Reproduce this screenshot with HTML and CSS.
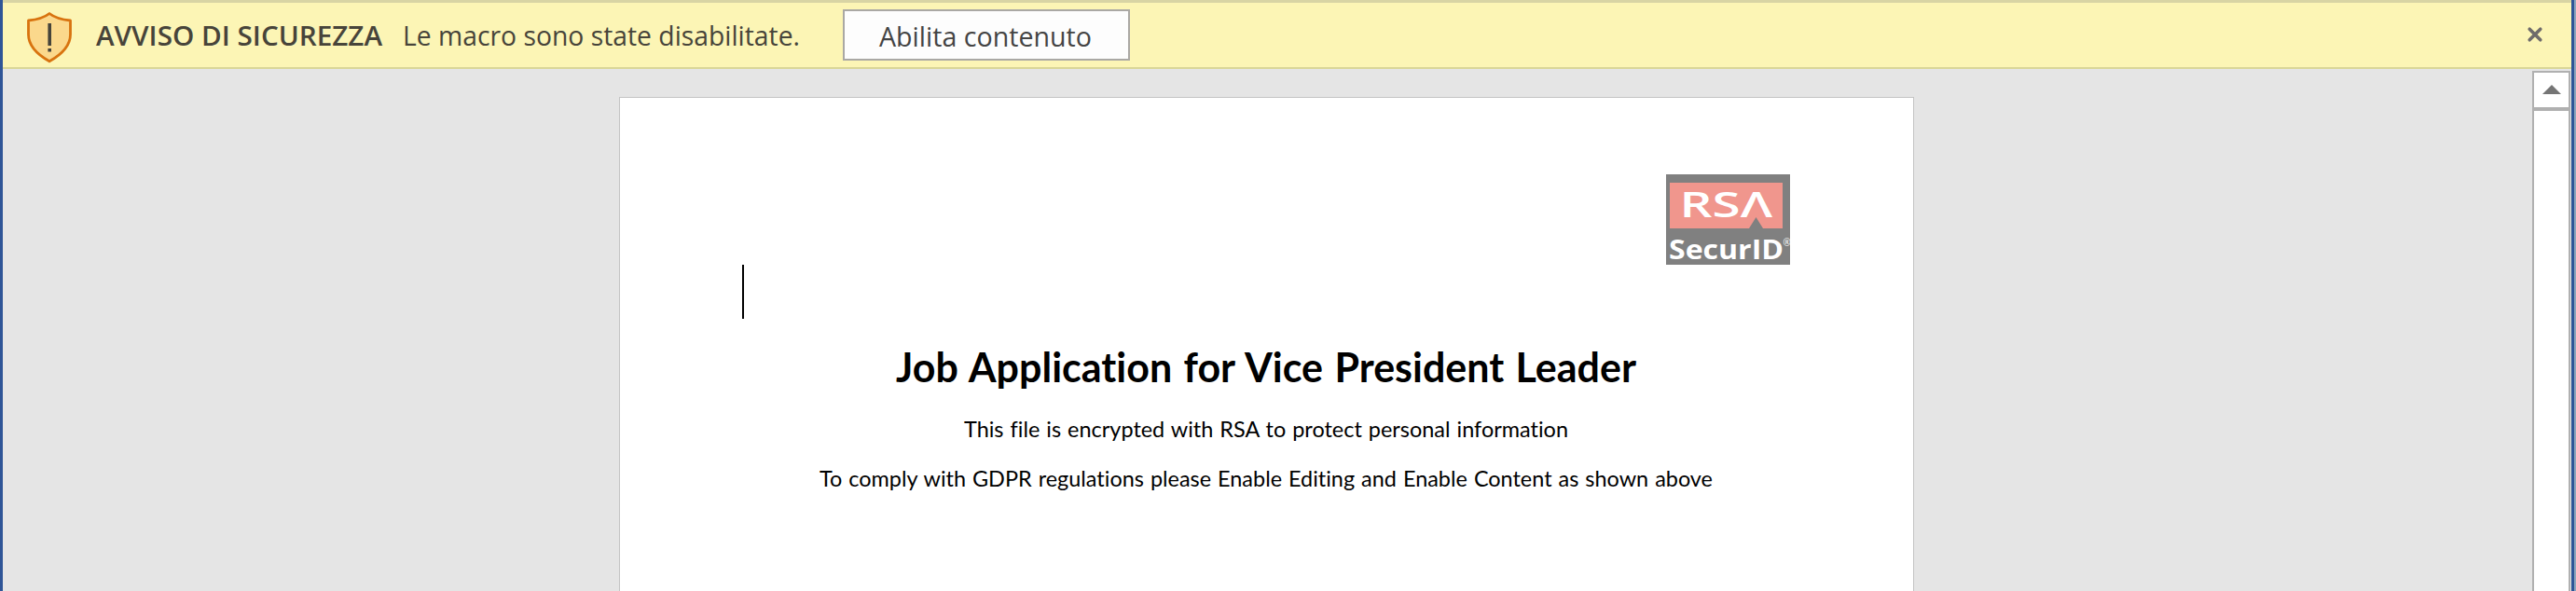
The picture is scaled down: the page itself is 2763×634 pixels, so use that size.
FILE: index.html
```html
<!DOCTYPE html>
<html lang="it">
<head>
<meta charset="utf-8">
<title>Documento</title>
<link rel="stylesheet" href="styles.css">
</head>
<body>
<div class="window">
  <header class="notice">
    <svg class="shield" width="50" height="56" viewBox="0 0 50 56">
      <path d="M25 2.500C30 6.500 38 9 47.500 10V25C47.500 37 37 47 25 53.800C13 47 2.500 37 2.500 25V10C12 9 20 6.500 25 2.500Z" fill="#fbd88c" stroke="#d8730f" stroke-width="2.800" stroke-linejoin="round"/>
      <path d="M25.200 13V37M25.200 40V43.500" stroke="#46433a" stroke-width="3.600" fill="none"/>
    </svg>
    <svg class="notice-title" width="312" height="69"><text x="0" y="46" textLength="307" lengthAdjust="spacingAndGlyphs">AVVISO DI SICUREZZA</text></svg>
    <svg class="notice-text" width="430" height="69"><text x="1" y="46" textLength="426" lengthAdjust="spacingAndGlyphs">Le macro sono state disabilitate.</text></svg>
    <button class="enable"><svg width="304" height="51"><text x="37" y="38.500" textLength="228" lengthAdjust="spacingAndGlyphs">Abilita contenuto</text></svg></button>
    <svg class="close" width="16" height="16" viewBox="0 0 16 16"><path d="M2.200 2.200L13.800 13.800M13.800 2.200L2.200 13.800"/></svg>
  </header>
  <main class="workspace">
    <article class="page">
      <svg class="logo" width="133" height="97" viewBox="0 0 133 97">
        <rect width="133" height="97" fill="#808080"/>
        <path d="M4 9H125V58H104L96.500 46L89 58H4Z" fill="#f0968d"/>
        <text class="brand" x="14.500" y="45.500" textLength="99.500" lengthAdjust="spacingAndGlyphs">RSΛ</text>
        <text class="product" x="3" y="90.500" textLength="123" lengthAdjust="spacingAndGlyphs">SecurID</text>
        <text class="mark" x="125.500" y="77">®</text>
      </svg>
      <div class="caret"></div>
      <h1 class="heading"><svg width="800" height="60"><text x="0" y="46" textLength="794" lengthAdjust="spacingAndGlyphs">Job Application for Vice President Leader</text></svg></h1>
      <p class="line first"><svg width="650" height="40"><text x="0" y="30" textLength="648" lengthAdjust="spacingAndGlyphs">This file is encrypted with RSA to protect personal information</text></svg></p>
      <p class="line second"><svg width="960" height="40"><text x="0" y="30" textLength="958" lengthAdjust="spacingAndGlyphs">To comply with GDPR regulations please Enable Editing and Enable Content as shown above</text></svg></p>
    </article>
    <aside class="scrollbar">
      <div class="up"><svg width="20" height="10" viewBox="0 0 20 10"><path d="M0 10L10 0L20 10Z" fill="#757575"/></svg></div>
      <div class="thumb"></div>
    </aside>
  </main>
</div>
</body>
</html>
```
FILE: styles.css
```css
* { box-sizing: border-box; }
body { margin: 0; background: #8aa5bd; overflow: hidden; }
svg { display: block; flex: none; overflow: visible; }
.window {
  width: 2761px;
  height: 634px;
  border-left: 3px solid #2f5597;
  border-right: 3px solid #2f5597;
  background: #e5e5e5;
  display: flex;
  flex-direction: column;
}
.notice {
  height: 74px;
  flex: none;
  border-top: 3px solid #d8d4a4;
  border-bottom: 2px solid #d9d697;
  background: #fcf5b5;
  display: flex;
  align-items: flex-start;
  font-family: "Open Sans", sans-serif;
  font-size: 29.5px;
}
.shield { margin: 9px 0 0 25px; }
.notice-title { margin-left: 25px; font-weight: 600; fill: #47443a; }
.notice-text { margin-left: 16px; fill: #47443a; }
.enable {
  width: 308px;
  height: 55px;
  margin: 7px 0 0 43px;
  padding: 0;
  border: 2px solid #aaa8a4;
  background: #fdfdfd;
  font: inherit;
  fill: #444;
}
.enable svg { margin-top: -3px; }
.close { margin: 26px 31px 0 auto; fill: none; stroke: #6f6b6b; stroke-width: 3.6; stroke-linecap: round; }
.workspace { flex: 1; display: flex; min-height: 0; }
.page {
  width: 1389px;
  margin: 30px 0 0 661px;
  border: 1px solid #c4c4c4;
  border-bottom: 0;
  background: #fff;
  display: flex;
  flex-direction: column;
  align-items: flex-start;
  font-family: Lato, sans-serif;
  font-variant-ligatures: none;
}
.logo { margin: 82px 0 0 1122px; font-family: "Open Sans", sans-serif; fill: #fff; }
.brand { font-size: 37.5px; font-weight: 600; }
.product { font-size: 28px; font-weight: 700; }
.mark { font-size: 10px; }
.caret { width: 2px; height: 58px; margin-left: 131px; background: #000; }
.heading { margin: 22px 0 0 296px; font-size: 44.5px; font-weight: 700; word-spacing: 2px; }
.line { margin: 0; font-size: 23.5px; word-spacing: 1px; }
.first { margin: 15px 0 0 369px; }
.second { margin: 13px 0 0 214px; }
.scrollbar {
  width: 41px;
  margin: 2px 1px 0 auto;
  border: 2px solid #b0b0b0;
  border-bottom: 0;
  background: #fff;
  display: flex;
  flex-direction: column;
}
.up { height: 41px; border-bottom: 4px solid #b0b0b0; padding: 13px 0 0 9px; }
.thumb { flex: 1; }
```
